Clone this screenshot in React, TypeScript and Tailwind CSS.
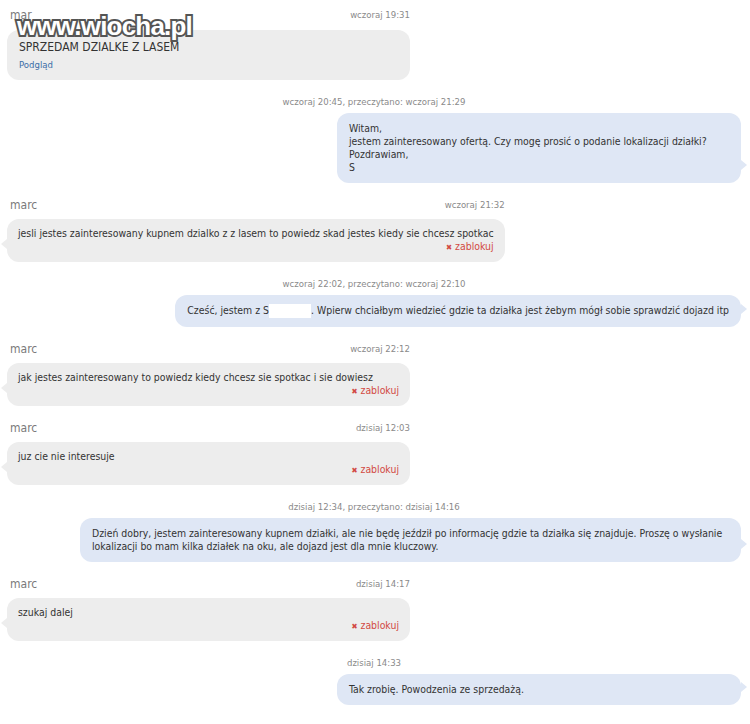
const Tail = ({ side }: { side: "l" | "r" }) =>
  side === "r" ? (
    <span className="absolute right-[-6px] bottom-[13px] h-0 w-0 border-y-[5px] border-y-transparent border-l-[6px] border-l-[#dfe7f5]" />
  ) : (
    <span className="absolute left-[-6px] bottom-[13px] h-0 w-0 border-y-[5px] border-y-transparent border-r-[6px] border-r-[#ededed]" />
  );

const Header = ({ time }: { time: string }) => (
  <div className="mb-[6px] flex h-4 items-center justify-between pl-[3px]">
    <span className="text-[12px] leading-4 text-[#7a7a7a]">marc</span>
    <span className="text-[9.5px] text-[#8a8a8a]">{time}</span>
  </div>
);

const Incoming = ({ time, text }: { time: string; text: string }) => (
  <div className="mt-[14px] w-fit min-w-[403px]">
    <Header time={time} />
    <div className="relative rounded-[12px] bg-[#ededed] px-[11px] py-[8px] text-[10.4px] leading-[13px]">
      <p className="whitespace-nowrap">{text}</p>
      <div className="text-right text-[#d24a43]">
        <span className="text-[8px]">✖</span> zablokuj
      </div>
      <Tail side="l" />
    </div>
  </div>
);

const Outgoing = ({ meta, children }: { meta: string; children: React.ReactNode }) => (
  <div className="mt-[16px]">
    <div className="mb-[5px] text-center text-[9.5px] leading-[12px] text-[#8a8a8a]">{meta}</div>
    <div className="flex justify-end">
      <div className="relative w-fit min-w-[404px] max-w-[661px] rounded-[12px] bg-[#dfe7f5] px-[12px] py-[9px] text-[10.4px] leading-[13px]">
        {children}
        <Tail side="r" />
      </div>
    </div>
  </div>
);

export default function App() {
  return (
    <div className="relative min-h-screen bg-white pb-4 pl-[7px] pr-[9px] pt-[7px] font-['DejaVu_Sans_Condensed','DejaVu_Sans',sans-serif] text-[#333]">
      {/* first incoming: offer */}
      <div className="w-[403px]">
        <div className="mb-[7px] flex h-4 items-center justify-between pl-[3px]">
          <span className="text-[12px] leading-4 text-[#7a7a7a]">mar</span>
          <span className="text-[9.5px] text-[#8a8a8a]">wczoraj 19:31</span>
        </div>
        <div className="rounded-[12px] bg-[#ededed] px-[12px] pb-[9px] pt-[10px]">
          <p className="text-[12px] leading-[15px]">SPRZEDAM DZIALKE Z LASEM</p>
          <a className="mt-[4px] block text-[9.5px] leading-[12px] text-[#3b6ea8]">Podgląd</a>
        </div>
      </div>

      <Outgoing meta="wczoraj 20:45, przeczytano: wczoraj 21:29">
        <p>Witam,</p>
        <p>jestem zainteresowany ofertą. Czy mogę prosić o podanie lokalizacji działki?</p>
        <p>Pozdrawiam,</p>
        <p>S</p>
      </Outgoing>

      <Incoming
        time="wczoraj 21:32"
        text="jesli jestes zainteresowany kupnem dzialko z z lasem to powiedz skad jestes kiedy sie chcesz spotkac"
      />

      <Outgoing meta="wczoraj 22:02, przeczytano: wczoraj 22:10">
        <p className="whitespace-nowrap">
          Cześć, jestem z S
          <span className="inline-block h-[14px] w-[42px] bg-white align-middle" />
          . Wpierw chciałbym wiedzieć gdzie ta działka jest żebym mógł sobie sprawdzić dojazd itp
        </p>
      </Outgoing>

      <Incoming time="wczoraj 22:12" text="jak jestes zainteresowany to powiedz kiedy chcesz sie spotkac i sie dowiesz" />

      <Incoming time="dzisiaj 12:03" text="juz cie nie interesuje" />

      <Outgoing meta="dzisiaj 12:34, przeczytano: dzisiaj 14:16">
        <p>
          Dzień dobry, jestem zainteresowany kupnem działki, ale nie będę jeździł po informację gdzie ta działka się
          znajduje. Proszę o wysłanie lokalizacji bo mam kilka działek na oku, ale dojazd jest dla mnie kluczowy.
        </p>
      </Outgoing>

      <Incoming time="dzisiaj 14:17" text="szukaj dalej" />

      <Outgoing meta="dzisiaj 14:33">
        <p>Tak zrobię. Powodzenia ze sprzedażą.</p>
      </Outgoing>

      {/* watermark */}
      <div className="absolute left-[17px] top-[11px] font-['Liberation_Sans',sans-serif] text-[26px] font-bold leading-[30px] tracking-[-0.8px] text-white [-webkit-text-stroke:4px_#555] [paint-order:stroke_fill]">
        www.wiocha.pl
      </div>
    </div>
  );
}
